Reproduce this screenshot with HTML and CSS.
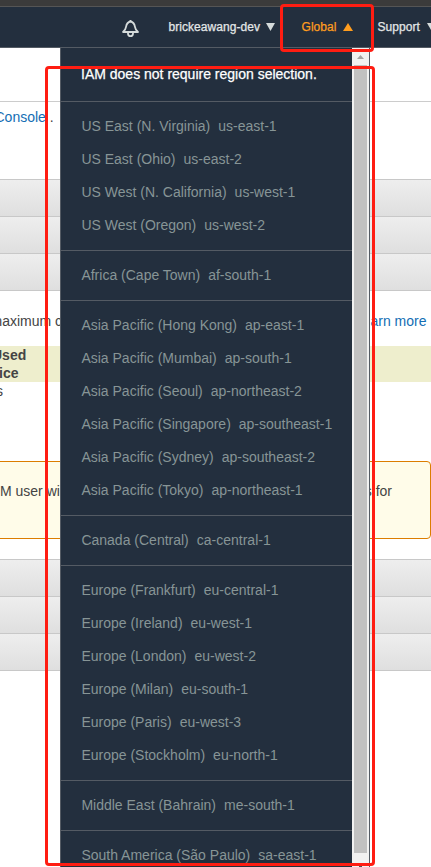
FILE: index.html
```
<!DOCTYPE html>
<html lang="en">
<head>
<meta charset="utf-8">
<title>IAM Management Console</title>
<link rel="stylesheet" href="styles.css">
</head>
<body>
<header class="topbar">
  <svg class="bell" width="19" height="19" viewBox="0 0 19 19" fill="none" stroke="#d5dbdb" stroke-width="1.8" stroke-linejoin="round">
    <path d="M9.5 2.5C6.9 3.1 5.5 4.8 5.1 7.7C4.8 10 4 11.4 2 13H17C15 11.4 14.2 10 13.9 7.7C13.5 4.8 12.1 3.1 9.5 2.5Z"/>
    <path d="M7 13.5V14.6C7.2 18 11.8 18 12 14.6V13.5M9.5 1V2.5"/>
  </svg>
  <span class="nav account">brickeawang-dev</span>
  <svg class="arrow" width="9" height="8"><path d="M0 0H9L4.5 8Z" fill="#d5dbdb"/></svg>
  <span class="nav global">Global</span>
  <svg class="arrow up" width="10" height="8"><path d="M5 0L10 8H0Z" fill="#ff9d1e"/></svg>
  <span class="nav support">Support</span>
  <svg class="arrow last" width="9" height="8"><path d="M0 0H9L4.5 8Z" fill="#d5dbdb"/></svg>
</header>
<main class="page">
  <div class="heading"></div>
  <p class="signin"><a>Console</a> .</p>
  <div class="panels"><div></div><div></div><div></div></div>
  <p class="intro"><span>maximum c</span><a>arn more</a></p>
  <div class="table-head"><div>Used</div><div>ice</div></div>
  <p class="cell">s</p>
  <div class="notice"><span>M user will</span><span class="notice-end">s for</span></div>
  <div class="panels lower"><div></div><div></div><div></div></div>
</main>
<aside class="dropdown">
  <div class="regions">
    <div class="title">IAM does not require region selection.</div>
    <ul>
      <li>US East (N. Virginia)<span>us-east-1</span></li>
      <li>US East (Ohio)<span>us-east-2</span></li>
      <li>US West (N. California)<span>us-west-1</span></li>
      <li>US West (Oregon)<span>us-west-2</span></li>
    </ul>
    <ul>
      <li>Africa (Cape Town)<span>af-south-1</span></li>
    </ul>
    <ul>
      <li>Asia Pacific (Hong Kong)<span>ap-east-1</span></li>
      <li>Asia Pacific (Mumbai)<span>ap-south-1</span></li>
      <li>Asia Pacific (Seoul)<span>ap-northeast-2</span></li>
      <li>Asia Pacific (Singapore)<span>ap-southeast-1</span></li>
      <li>Asia Pacific (Sydney)<span>ap-southeast-2</span></li>
      <li>Asia Pacific (Tokyo)<span>ap-northeast-1</span></li>
    </ul>
    <ul>
      <li>Canada (Central)<span>ca-central-1</span></li>
    </ul>
    <ul>
      <li>Europe (Frankfurt)<span>eu-central-1</span></li>
      <li>Europe (Ireland)<span>eu-west-1</span></li>
      <li>Europe (London)<span>eu-west-2</span></li>
      <li>Europe (Milan)<span>eu-south-1</span></li>
      <li>Europe (Paris)<span>eu-west-3</span></li>
      <li>Europe (Stockholm)<span>eu-north-1</span></li>
    </ul>
    <ul>
      <li>Middle East (Bahrain)<span>me-south-1</span></li>
    </ul>
    <ul>
      <li>South America (São Paulo)<span>sa-east-1</span></li>
    </ul>
  </div>
  <div class="scrollbar">
    <svg width="17" height="17"><path d="M5 11L8.5 7L12 11Z" fill="#a3a3a3"/></svg>
    <div class="thumb"></div>
    <svg class="down" width="17" height="14"><path d="M7 13H10V14H7Z" fill="#505050"/></svg>
  </div>
</aside>
<div class="mark mark-global"></div>
<div class="mark mark-list"></div>
</body>
</html>
```

FILE: styles.css
```
* { box-sizing: border-box; }
html, body { overflow: hidden; }
body {
  position: relative;
  margin: 0;
  width: 431px;
  height: 867px;
  background: #fff;
  color: #444;
  font: 14px/18px "Liberation Sans", Arial, sans-serif;
}
p, ul { margin: 0; padding: 0; }
ul { list-style: none; }
a { color: #146eb4; }

.topbar {
  display: flex;
  align-items: center;
  height: 48px;
  padding-left: 121px;
  border-top: 6px solid #3b3b3b;
  border-bottom: 1px solid #545b64;
  background: #232f3e;
  box-shadow: inset 0 1px #555;
  overflow: hidden;
}
.topbar > * { flex: none; }
.bell { margin-top: 3px; }
.nav {
  color: #e3e7e7;
  font-size: 12px;
  letter-spacing: .05px;
  white-space: nowrap;
  -webkit-text-stroke: .25px currentColor;
}
.account { width: 92px; margin-left: 28.5px; }
.arrow { margin-left: 5.5px; }
.global { width: 35px; margin-left: 26.5px; color: #ff9d1e; }
.up { margin-left: 6px; }
.support { width: 43px; margin-left: 25px; }
.last { margin-left: 6px; }

.heading { height: 54px; border-bottom: 1px solid #ccc; }
.signin { height: 77px; margin-left: -5.5px; padding-top: 6px; white-space: nowrap; }
.panels { border-top: 1px solid #c8c8c8; }
.panels div {
  height: 37px;
  border-bottom: 1px solid #c8c8c8;
  background: linear-gradient(#eee, #dfdfdf);
}
.intro {
  display: flex;
  justify-content: space-between;
  height: 55px;
  padding: 21px 4.5px 0 0;
  white-space: nowrap;
}
.intro span { margin-left: -9.5px; }
.table-head { height: 36px; background: #eeeecd; font-weight: bold; }
.table-head div { margin-left: -1px; }
.table-head div:first-child { margin-left: -8px; }
.cell { height: 79px; margin-left: -4px; }
.notice {
  display: flex;
  justify-content: space-between;
  height: 78px;
  margin-left: -10px;
  padding: 20px 38px 0 9px;
  border: 1px solid #dc7d00;
  border-radius: 4px;
  background: #fffce9;
}
.lower { margin-top: 20px; }

.dropdown {
  position: absolute;
  top: 48px;
  left: 60px;
  display: flex;
  width: 310px;
  height: 819px;
  border: solid #545b64;
  border-width: 0 1px;
  background: #232f3e;
  overflow: hidden;
}
.regions { width: 291px; color: #879596; }
.title { height: 53px; padding: 17px 20px 0; color: #fff; -webkit-text-stroke: .25px #fff; white-space: nowrap; }
.regions ul { padding: 8px 20px 8px 20.4px; border-top: 1px solid #545b64; }
.regions li { height: 33px; line-height: 33px; white-space: nowrap; }
.regions li span { margin-left: 8px; }
.scrollbar { display: flex; flex-direction: column; width: 17px; background: #f1f1f1; }
.scrollbar > * { flex: none; }
.thumb { width: 13px; height: 788px; margin-left: 2px; background: #c1c1c1; }

.mark { position: absolute; border: 3px solid #ff1d12; border-radius: 4px; }
.mark-global { left: 280px; top: 4px; width: 94px; height: 48px; }
.mark-list { left: 45px; top: 66px; width: 330px; height: 800px; }
```
